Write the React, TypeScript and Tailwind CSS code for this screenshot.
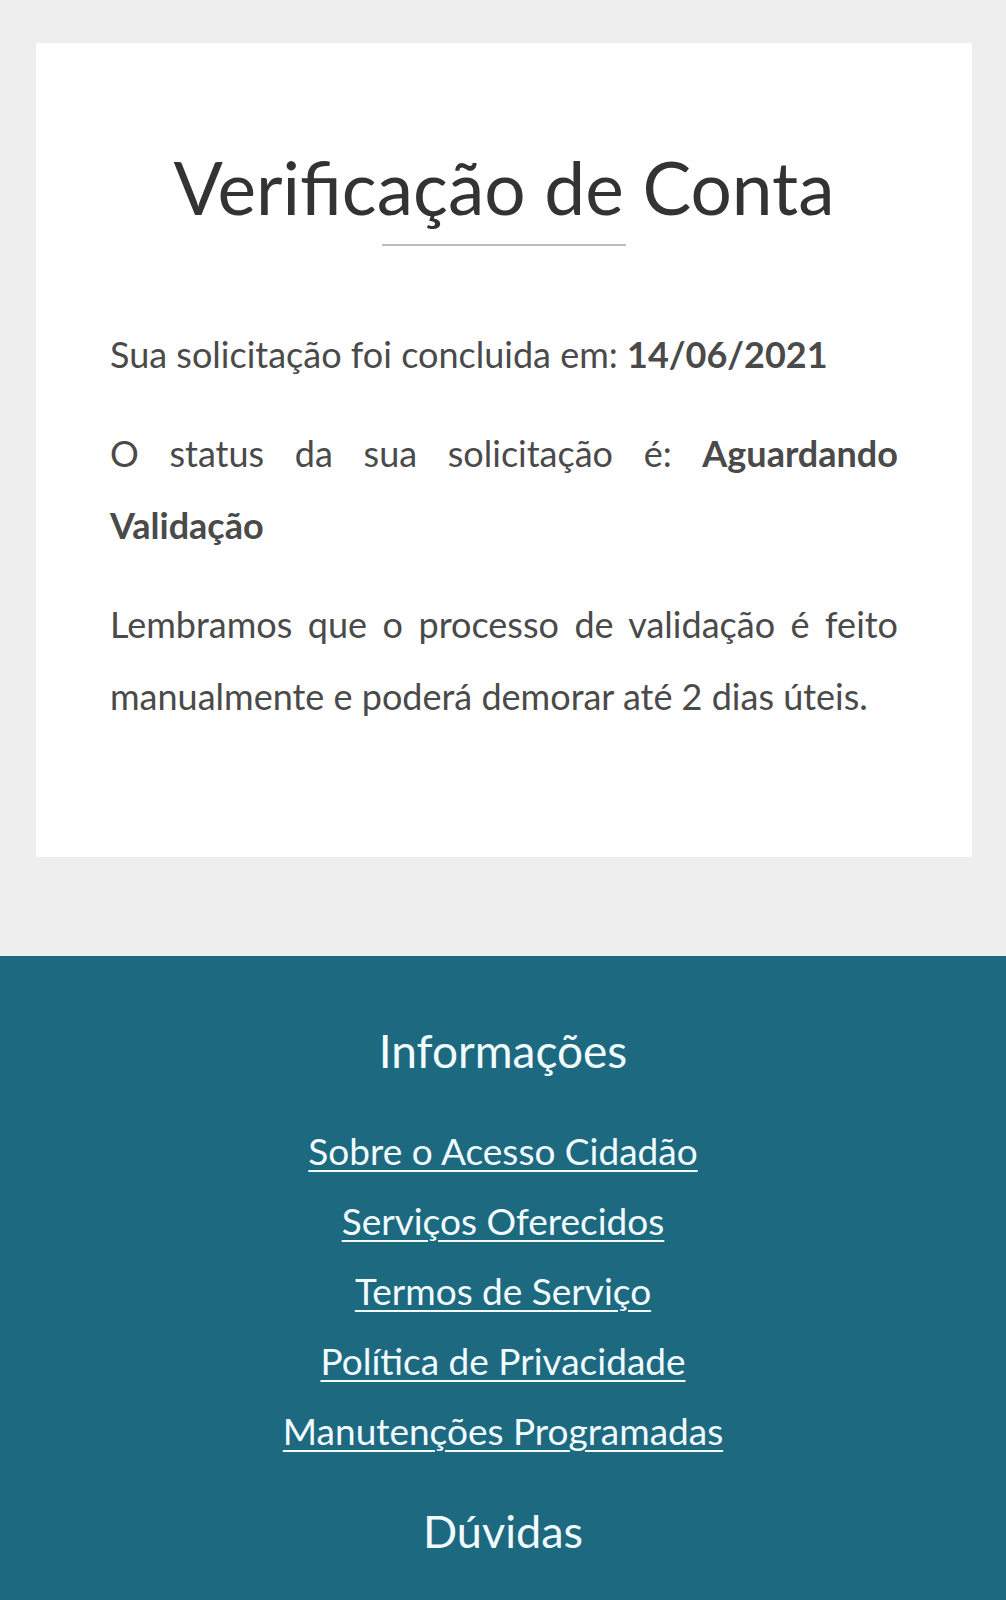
const links = [
  "Sobre o Acesso Cidadão",
  "Serviços Oferecidos",
  "Termos de Serviço",
  "Política de Privacidade",
  "Manutenções Programadas",
];

export default function App() {
  return (
    <div className="min-h-[1600px] bg-[#eeeeee] font-['Lato','Open_Sans',sans-serif]">
      {/* Card */}
      <div className="pl-[36px] pr-[34px] pt-[43px]">
        <div className="bg-white px-[74px] pt-[107px] pb-[125px]">
          <h1 className="text-center text-[73px] leading-[75px] text-[#333333]">
            Verificação de Conta
          </h1>
          <div className="mx-auto mt-[19px] h-[2px] w-[244px] bg-[#bbbbbb]" />

          <div className="mt-[72px] text-[36px] leading-[72px] text-[#4a4a4a] text-justify">
            <p>
              Sua solicitação foi concluida em: <b className="font-bold">14/06/2021</b>
            </p>
            <p className="mt-[27px]">
              O status da sua solicitação é: <b className="font-bold">Aguardando Validação</b>
            </p>
            <p className="mt-[27px]">
              Lembramos que o processo de validação é feito manualmente e poderá demorar até 2 dias úteis.
            </p>
          </div>
        </div>
      </div>

      {/* Footer */}
      <footer className="mt-[99px] bg-[#1d6a80] pt-[69px] pb-[120px] text-center text-[#f2fbff]">
        <h2 className="text-[46px] leading-[52px]">Informações</h2>
        <ul className="mt-[39px]">
          {links.map((l) => (
            <li key={l} className="text-[37px] leading-[70px]">
              <a href="#" className="underline decoration-2 underline-offset-[5px]">
                {l}
              </a>
            </li>
          ))}
        </ul>
        <h2 className="mt-[40px] text-[45px] leading-[50px]">Dúvidas</h2>
      </footer>
    </div>
  );
}
